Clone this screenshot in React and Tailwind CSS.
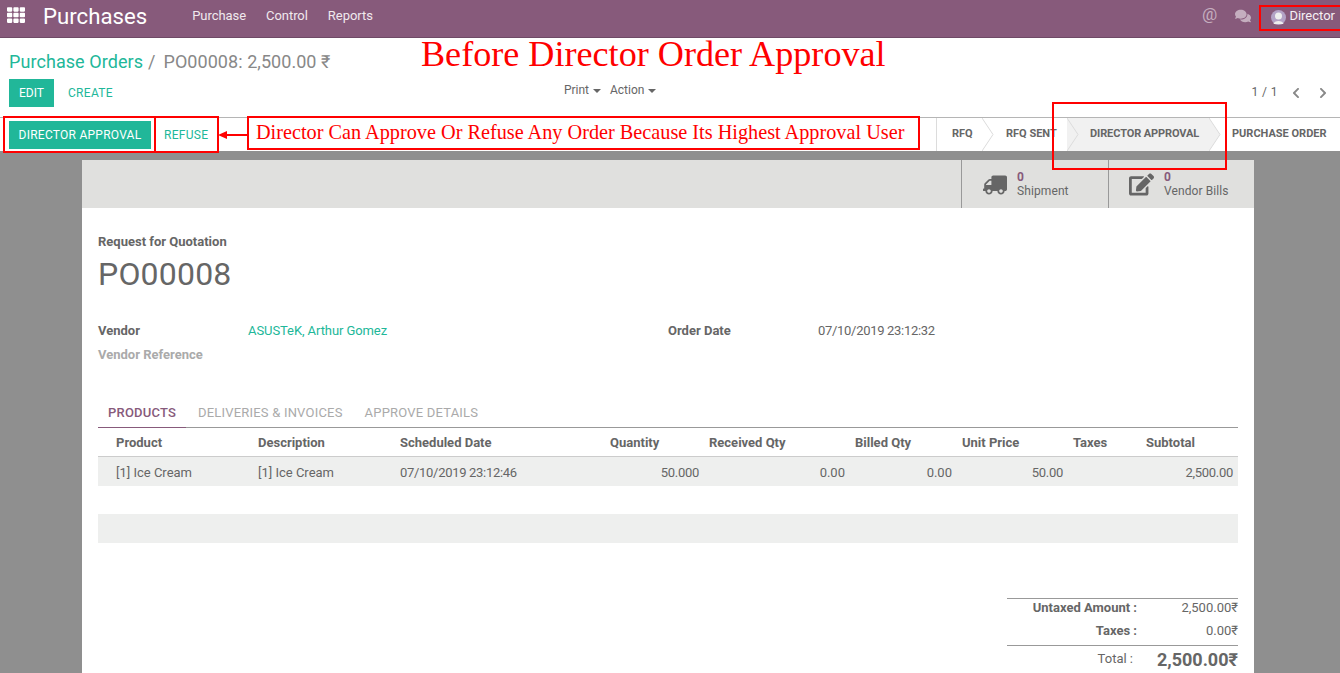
import { FaTh, FaTruck, FaEdit, FaComments, FaChevronLeft, FaChevronRight } from "react-icons/fa";

const Caret = () => (
  <span className="inline-block ml-1 align-middle border-x-[4px] border-x-transparent border-t-[4px] border-t-[#666]" />
);

const Chevron = () => (
  <svg width="12" height="33" viewBox="0 0 12 33" className="absolute left-full top-0 z-10">
    <path d="M0 0 L11 16.5 L0 33" fill="none" stroke="#dcdcdc" strokeWidth="1" />
  </svg>
);

const Step = ({ label, className, active }) => (
  <div className={`relative h-full flex items-center text-[11px] font-bold text-[#666] ${active ? "bg-[#f1f1f1]" : ""} ${className}`}>
    {label}
    {active ? (
      <svg width="12" height="33" viewBox="0 0 12 33" className="absolute left-full top-0 z-10">
        <path d="M0 0 L11 16.5 L0 33 Z" fill="#f1f1f1" />
        <path d="M0 0 L11 16.5 L0 33" fill="none" stroke="#dcdcdc" />
      </svg>
    ) : (
      <Chevron />
    )}
  </div>
);

const colsClass = "grid grid-cols-[142px_142px_223px_99px_146px_107px_111px_73px_97px]";

const StatButton = ({ icon, label, className }) => (
  <div className={`h-full border-l border-[#999] flex items-start ${className}`}>
    {icon}
    <div className="pt-[10px] text-[12px] leading-[14px] tracking-[0.1px] text-[#666]">
      <div className="font-bold text-[#875A7B]">0</div>
      <div>{label}</div>
    </div>
  </div>
);

const Headers = ["Product", "Description", "Scheduled Date", "Quantity", "Received Qty", "Billed Qty", "Unit Price", "Taxes", "Subtotal"];

const App = () => {
  return (
    <div className="relative h-[673px] overflow-hidden bg-[#8f8f8f] font-['Roboto',sans-serif] text-[13px] text-[#666]">
      {/* navbar */}
      <div className="h-[38px] bg-[#875A7B] border-b border-[#6f4a66] flex items-center text-white pb-[5px]">
        <FaTh className="ml-[7px] text-[18px] -mt-[2px] text-white" />
        <span className="ml-[18px] text-[22.2px] font-normal leading-none">Purchases</span>
        <nav className="ml-[45px] flex gap-5 text-[13px] tracking-[-0.05px] text-[#f0e9ee]">
          <span>Purchase</span>
          <span>Control</span>
          <span>Reports</span>
        </nav>
        <div className="ml-auto flex items-center h-full">
          <span className="text-[17px] text-[#c5aebf] -mt-[3px]">@</span>
          <FaComments className="ml-[18px] text-[16px] text-[#c5aebf]" />
          <svg width="15" height="15" viewBox="0 0 15 15" className="ml-[20px] mt-[3px]">
            <circle cx="7.5" cy="7.5" r="7.5" fill="#b3a2c6" />
            <circle cx="7.5" cy="6" r="3.5" fill="#eee" />
            <path d="M2.5 14 C3 10 12 10 12.5 14 Z" fill="#eee" />
          </svg>
          <span className="ml-[3px] mr-[5px] text-[13px] text-[#f5f0f4]">Director</span>
        </div>
      </div>

      {/* control panel */}
      <div className="h-[113px] bg-white flex flex-col">
        <div className="h-[80px] border-b border-[#b5b5b5] pl-[9px] pr-[11px] flex flex-col">
          <div className="pt-[13px] text-[18px] leading-[22px] whitespace-nowrap">
            <span className="text-[#21b799] tracking-[0.07px]">Purchase Orders</span>
            <span className="text-[#888] ml-[5px]">/</span>
            <span className="text-[#888] ml-[8px] tracking-[0.05px]">PO00008: 2,500.00 ₹</span>
          </div>
          <div className="mt-[6px] flex items-center">
            <div className="h-[28px] w-[45px] bg-[#21b799] text-white text-[12px] flex items-center justify-center">EDIT</div>
            <div className="ml-[14px] text-[12px] tracking-[0.3px] text-[#21b799]">CREATE</div>
            <div className="ml-[451px] flex gap-[9px] text-[12px] -mt-[6px] text-[#666]">
              <span>Print<Caret /></span>
              <span>Action<Caret /></span>
            </div>
            <div className="ml-auto flex items-center text-[12px] tracking-[0.4px] text-[#666]">
              <span className="-mt-[2px]">1 / 1</span>
              <FaChevronLeft className="ml-[12px] text-[12px] text-[#888]" />
              <FaChevronRight className="ml-[15px] text-[12px] text-[#888]" />
            </div>
          </div>
        </div>
        <div className="h-[33px] flex items-center pl-[9px]">
          <div className="h-[28px] w-[142px] bg-[#21b799] text-white text-[12px] tracking-[0.25px] flex items-center justify-center">DIRECTOR APPROVAL</div>
          <div className="ml-[13px] text-[12px] tracking-[0.3px] text-[#21b799]">REFUSE</div>
          <div className="ml-auto h-full flex border-l border-[#dcdcdc] w-[404px]">
            <Step label="RFQ" className="w-[45px] pl-[15px]" />
            <Step label="RFQ SENT" className="w-[85px] pl-[24px]" />
            <Step label="DIRECTOR APPROVAL" active className="w-[142px] pl-[23px] tracking-[-0.1px]" />
            <div className="h-full flex items-center pl-[23px] text-[11px] font-bold text-[#666] whitespace-nowrap">PURCHASE ORDER</div>
          </div>
        </div>
      </div>

      {/* sheet */}
      <div className="mt-[9px] ml-[82px] w-[1172px] bg-white h-[520px]">
        <div className="h-[48px] bg-[#e0e0de] flex justify-end">
          <StatButton
            icon={<FaTruck className="ml-[21px] mt-[13px] mr-[10px] text-[24px] text-[#666] -scale-x-100" />}
            label="Shipment"
            className="w-[147px]"
          />
          <StatButton
            icon={<FaEdit className="ml-[20px] mt-[12px] mr-[10px] text-[25px] text-[#666]" />}
            label="Vendor Bills"
            className="w-[146px]"
          />
        </div>

        <div className="px-4">
          <div className="pt-[26px] text-[13px] leading-[15px] font-bold text-[#666]">Request for Quotation</div>
          <div className="mt-[5px] text-[32px] leading-[40px] text-[#666] tracking-[0.2px]">PO00008</div>

          <div className="mt-[25px] grid grid-cols-[150px_420px_150px_1fr] text-[13px] leading-[24px]">
            <div className="font-bold">Vendor</div>
            <div className="text-[#21b799] tracking-[-0.08px]">ASUSTeK, Arthur Gomez</div>
            <div className="font-bold">Order Date</div>
            <div className="tracking-[-0.3px]">07/10/2019 23:12:32</div>
            <div className="font-bold text-[#aaa] col-span-4">Vendor Reference</div>
          </div>

          {/* tabs */}
          <div className="mt-[29px] h-[32px] flex border-b border-[#999] text-[13px] tracking-[0.2px] uppercase text-[#aaa]">
            <div className="w-[88px] pl-[10px] pt-[7px] border-b border-[#875A7B] h-[32px] font-medium text-[#875A7B]">Products</div>
            <div className="ml-[12px] pt-[7px]">Deliveries &amp; Invoices</div>
            <div className="ml-[22px] pt-[7px]">Approve Details</div>
          </div>

          {/* lines */}
          <div className={`${colsClass} h-[29px] items-center pt-[2px] border-b border-[#ccc] text-[13px] font-bold`}>
            {Headers.map((h, i) => (
              <div key={h} className={i < 3 ? "pl-[18px]" : "pl-[5px]"}>{h}</div>
            ))}
          </div>
          <div className={`${colsClass} h-[29px] items-center pt-[2px] bg-[#eeefee] text-[13px]`}>
            <div className="pl-[18px]">[1] Ice Cream</div>
            <div className="pl-[18px]">[1] Ice Cream</div>
            <div className="pl-[18px] tracking-[-0.3px]">07/10/2019 23:12:46</div>
            <div className="pr-[5px] text-right tracking-[-0.3px]">50.000</div>
            <div className="pr-[5px] text-right">0.00</div>
            <div className="pr-[5px] text-right">0.00</div>
            <div className="pr-[5px] text-right tracking-[-0.3px]">50.00</div>
            <div />
            <div className="pr-[5px] text-right tracking-[-0.3px]">2,500.00</div>
          </div>
          <div className="mt-[28px] h-[29px] bg-[#eeefee]" />

          {/* totals */}
          <div className="mt-[55px] ml-auto w-[231px] text-[13px]">
            <div className="border-t border-[#999] h-[18px] flex items-center">
              <div className="w-[130px] text-right font-bold">Untaxed Amount :</div>
              <div className="flex-1 text-right">2,500.00₹</div>
            </div>
            <div className="h-[30px] flex items-center border-b border-[#999]">
              <div className="w-[130px] text-right font-bold">Taxes :</div>
              <div className="flex-1 text-right">0.00₹</div>
            </div>
            <div className="h-[26px] flex items-center">
              <div className="w-[126px] text-right">Total :</div>
              <div className="flex-1 text-right text-[18px] font-bold">2,500.00₹</div>
            </div>
          </div>
        </div>
      </div>

      {/* red annotations drawn over the screenshot */}
      <div className="absolute left-[421px] top-[32px] font-['Liberation_Serif',serif] text-[36.15px] leading-[44px] text-[#ff0000] whitespace-nowrap">Before Director Order Approval</div>
      <div className="absolute left-[3px] top-[116px] w-[153px] h-[37px] border-2 border-[#f00]" />
      <div className="absolute left-[154px] top-[116px] w-[65px] h-[37px] border-2 border-[#f00]" />
      <div className="absolute left-[247px] top-[116px] w-[673px] h-[34px] border-2 border-[#f00] flex items-center pl-[7px] pb-[2px] font-['Liberation_Serif',serif] text-[20.25px] text-[#f00] whitespace-nowrap">Director Can Approve Or Refuse Any Order Because Its Highest Approval User</div>
      <svg width="30" height="10" viewBox="0 0 30 10" className="absolute left-[218px] top-[130px]">
        <path d="M0 5 L9 1 L9 9 Z" fill="#f00" />
        <path d="M8 5 H30" stroke="#f00" strokeWidth="2" />
      </svg>
      <div className="absolute left-[1052px] top-[102px] w-[175px] h-[68px] border-2 border-[#f00]" />
      <div className="absolute left-[1259px] top-[5px] w-[81px] h-[26px] border-2 border-r-0 border-[#f00]" />
    </div>
  );
};

export default App;
